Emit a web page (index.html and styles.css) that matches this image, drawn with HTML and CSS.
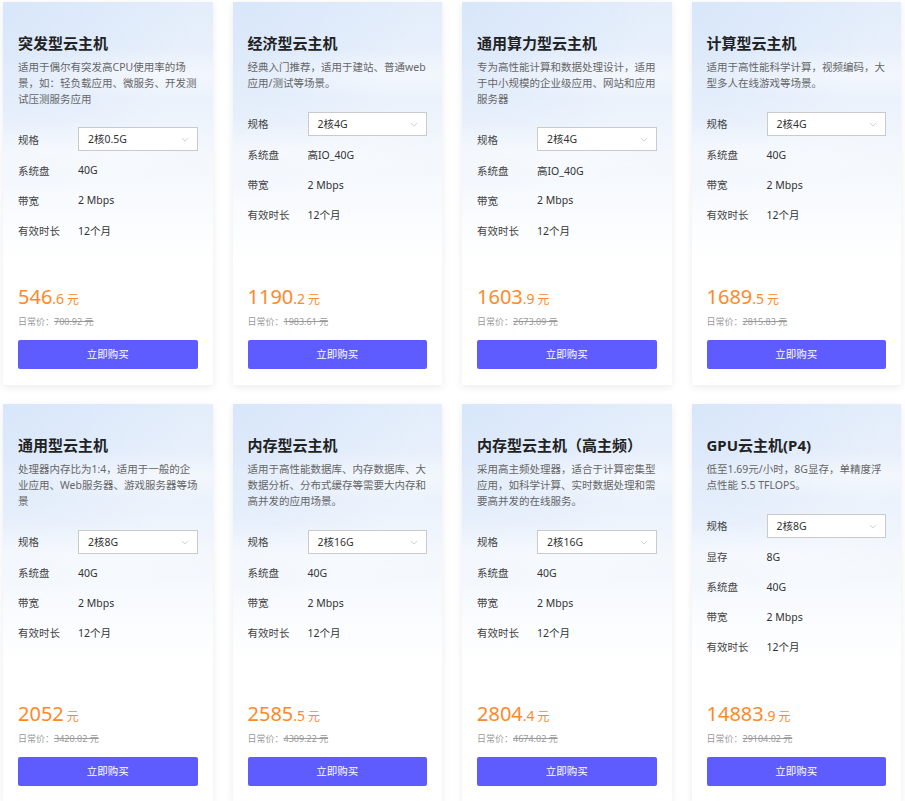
FILE: index.html
```html
<!DOCTYPE html>
<html lang="zh-CN">
<head>
    <meta charset="UTF-8">
    <meta name="viewport" content="width=device-width, initial-scale=1.0">
    <title>云主机</title>
    <link rel="stylesheet" href="styles.css">
</head>
<body>
    <div class="product-list">
        <!-- 第一行 -->
        <div class="product-card">
            <h3 class="product-title">突发型云主机</h3>
            <p class="product-desc">适用于偶尔有突发高CPU使用率的场景，如：轻负载应用、微服务、开发测试压测服务应用</p>
            <div class="spec-list">
                <div class="spec-row first"><span class="spec-label">规格</span><div class="spec-select">2核0.5G<svg class="arrow" viewBox="0 0 10 6"><polyline points="1,1 5,5 9,1"/></svg></div></div>
                <div class="spec-row"><span class="spec-label">系统盘</span><span class="spec-value">40G</span></div>
                <div class="spec-row"><span class="spec-label">带宽</span><span class="spec-value">2 Mbps</span></div>
                <div class="spec-row"><span class="spec-label">有效时长</span><span class="spec-value">12个月</span></div>
            </div>
            <div class="price"><span class="price-int">546</span><span class="price-dec">.6</span><span class="price-unit">元</span></div>
            <div class="price-old">日常价：<s>700.92 元</s></div>
            <a class="buy-btn">立即购买</a>
        </div>
        <div class="product-card">
            <h3 class="product-title">经济型云主机</h3>
            <p class="product-desc">经典入门推荐，适用于建站、普通web应用/测试等场景。</p>
            <div class="spec-list">
                <div class="spec-row first"><span class="spec-label">规格</span><div class="spec-select">2核4G<svg class="arrow" viewBox="0 0 10 6"><polyline points="1,1 5,5 9,1"/></svg></div></div>
                <div class="spec-row"><span class="spec-label">系统盘</span><span class="spec-value">高IO_40G</span></div>
                <div class="spec-row"><span class="spec-label">带宽</span><span class="spec-value">2 Mbps</span></div>
                <div class="spec-row"><span class="spec-label">有效时长</span><span class="spec-value">12个月</span></div>
            </div>
            <div class="price"><span class="price-int">1190</span><span class="price-dec">.2</span><span class="price-unit">元</span></div>
            <div class="price-old">日常价：<s>1983.61 元</s></div>
            <a class="buy-btn">立即购买</a>
        </div>
        <div class="product-card">
            <h3 class="product-title">通用算力型云主机</h3>
            <p class="product-desc">专为高性能计算和数据处理设计，适用于中小规模的企业级应用、网站和应用服务器</p>
            <div class="spec-list">
                <div class="spec-row first"><span class="spec-label">规格</span><div class="spec-select">2核4G<svg class="arrow" viewBox="0 0 10 6"><polyline points="1,1 5,5 9,1"/></svg></div></div>
                <div class="spec-row"><span class="spec-label">系统盘</span><span class="spec-value">高IO_40G</span></div>
                <div class="spec-row"><span class="spec-label">带宽</span><span class="spec-value">2 Mbps</span></div>
                <div class="spec-row"><span class="spec-label">有效时长</span><span class="spec-value">12个月</span></div>
            </div>
            <div class="price"><span class="price-int">1603</span><span class="price-dec">.9</span><span class="price-unit">元</span></div>
            <div class="price-old">日常价：<s>2673.09 元</s></div>
            <a class="buy-btn">立即购买</a>
        </div>
        <div class="product-card">
            <h3 class="product-title">计算型云主机</h3>
            <p class="product-desc">适用于高性能科学计算，视频编码，大型多人在线游戏等场景。</p>
            <div class="spec-list">
                <div class="spec-row first"><span class="spec-label">规格</span><div class="spec-select">2核4G<svg class="arrow" viewBox="0 0 10 6"><polyline points="1,1 5,5 9,1"/></svg></div></div>
                <div class="spec-row"><span class="spec-label">系统盘</span><span class="spec-value">40G</span></div>
                <div class="spec-row"><span class="spec-label">带宽</span><span class="spec-value">2 Mbps</span></div>
                <div class="spec-row"><span class="spec-label">有效时长</span><span class="spec-value">12个月</span></div>
            </div>
            <div class="price"><span class="price-int">1689</span><span class="price-dec">.5</span><span class="price-unit">元</span></div>
            <div class="price-old">日常价：<s>2815.83 元</s></div>
            <a class="buy-btn">立即购买</a>
        </div>
        <!-- 第二行 -->
        <div class="product-card">
            <h3 class="product-title">通用型云主机</h3>
            <p class="product-desc">处理器内存比为1:4，适用于一般的企业应用、Web服务器、游戏服务器等场景</p>
            <div class="spec-list">
                <div class="spec-row first"><span class="spec-label">规格</span><div class="spec-select">2核8G<svg class="arrow" viewBox="0 0 10 6"><polyline points="1,1 5,5 9,1"/></svg></div></div>
                <div class="spec-row"><span class="spec-label">系统盘</span><span class="spec-value">40G</span></div>
                <div class="spec-row"><span class="spec-label">带宽</span><span class="spec-value">2 Mbps</span></div>
                <div class="spec-row"><span class="spec-label">有效时长</span><span class="spec-value">12个月</span></div>
            </div>
            <div class="price"><span class="price-int">2052</span><span class="price-unit">元</span></div>
            <div class="price-old">日常价：<s>3420.02 元</s></div>
            <a class="buy-btn">立即购买</a>
        </div>
        <div class="product-card">
            <h3 class="product-title">内存型云主机</h3>
            <p class="product-desc">适用于高性能数据库、内存数据库、大数据分析、分布式缓存等需要大内存和高并发的应用场景。</p>
            <div class="spec-list">
                <div class="spec-row first"><span class="spec-label">规格</span><div class="spec-select">2核16G<svg class="arrow" viewBox="0 0 10 6"><polyline points="1,1 5,5 9,1"/></svg></div></div>
                <div class="spec-row"><span class="spec-label">系统盘</span><span class="spec-value">40G</span></div>
                <div class="spec-row"><span class="spec-label">带宽</span><span class="spec-value">2 Mbps</span></div>
                <div class="spec-row"><span class="spec-label">有效时长</span><span class="spec-value">12个月</span></div>
            </div>
            <div class="price"><span class="price-int">2585</span><span class="price-dec">.5</span><span class="price-unit">元</span></div>
            <div class="price-old">日常价：<s>4309.22 元</s></div>
            <a class="buy-btn">立即购买</a>
        </div>
        <div class="product-card">
            <h3 class="product-title">内存型云主机（高主频）</h3>
            <p class="product-desc">采用高主频处理器，适合于计算密集型应用，如科学计算、实时数据处理和需要高并发的在线服务。</p>
            <div class="spec-list">
                <div class="spec-row first"><span class="spec-label">规格</span><div class="spec-select">2核16G<svg class="arrow" viewBox="0 0 10 6"><polyline points="1,1 5,5 9,1"/></svg></div></div>
                <div class="spec-row"><span class="spec-label">系统盘</span><span class="spec-value">40G</span></div>
                <div class="spec-row"><span class="spec-label">带宽</span><span class="spec-value">2 Mbps</span></div>
                <div class="spec-row"><span class="spec-label">有效时长</span><span class="spec-value">12个月</span></div>
            </div>
            <div class="price"><span class="price-int">2804</span><span class="price-dec">.4</span><span class="price-unit">元</span></div>
            <div class="price-old">日常价：<s>4674.02 元</s></div>
            <a class="buy-btn">立即购买</a>
        </div>
        <div class="product-card">
            <h3 class="product-title">GPU云主机(P4)</h3>
            <p class="product-desc">低至1.69元/小时，8G显存，单精度浮点性能 5.5 TFLOPS。</p>
            <div class="spec-list">
                <div class="spec-row first"><span class="spec-label">规格</span><div class="spec-select">2核8G<svg class="arrow" viewBox="0 0 10 6"><polyline points="1,1 5,5 9,1"/></svg></div></div>
                <div class="spec-row"><span class="spec-label">显存</span><span class="spec-value">8G</span></div>
                <div class="spec-row"><span class="spec-label">系统盘</span><span class="spec-value">40G</span></div>
                <div class="spec-row"><span class="spec-label">带宽</span><span class="spec-value">2 Mbps</span></div>
                <div class="spec-row"><span class="spec-label">有效时长</span><span class="spec-value">12个月</span></div>
            </div>
            <div class="price"><span class="price-int">14883</span><span class="price-dec">.9</span><span class="price-unit">元</span></div>
            <div class="price-old">日常价：<s>29104.02 元</s></div>
            <a class="buy-btn">立即购买</a>
        </div>
    </div>
</body>
</html>
```

FILE: styles.css
```css
*{
    box-sizing: border-box;
}
body{
    margin: 0;
    background: #fff;
    font-family: "Noto Sans", "Noto Sans CJK SC", sans-serif;
    color: #333;
}
.product-list{
    display: grid;
    grid-template-columns: repeat(4, 1fr);
    gap: 19px 20px;
    padding: 2px 4px 20px 3px;
}
/* 卡片顶部浅蓝色渐变背景，往下渐变为白色 */
.product-card{
    display: flex;
    flex-direction: column;
    padding: 31px 15px 16px;
    background:
        radial-gradient(120% 36px at 75% 72px, rgba(255,255,255,.5), rgba(255,255,255,0) 70%),
        radial-gradient(140% 44px at 25% 150px, rgba(255,255,255,.45), rgba(255,255,255,0) 70%),
        radial-gradient(90% 200px at 0 0, rgba(208,226,249,.6), rgba(208,226,249,0) 100%),
        linear-gradient(180deg, #e3edfb 0, #edf3fc 110px, #f7fafe 190px, #fff 260px);
    box-shadow: 0 2px 8px rgba(0,0,0,.08);
}
.product-title{
    margin: 0;
    font-size: 15px;
    line-height: 20px;
    font-weight: bold;
    color: #222;
}
.product-desc{
    margin: 7px 0 0;
    font-size: 10.5px;
    line-height: 15.75px;
    color: #666;
}
.spec-list{
    margin: 16px 0 38px;
    font-size: 10.5px;
}
.spec-row{
    display: flex;
    align-items: center;
    height: 30px;
}
.spec-row.first{
    height: 32px;
}
.spec-label{
    width: 60px;
    flex-shrink: 0;
    color: #444;
}
.spec-value{
    color: #333;
}
.spec-select{
    flex: 1;
    position: relative;
    height: 24px;
    line-height: 22px;
    padding-left: 9px;
    border: 1px solid #cacaca;
    background: #fff;
    color: #333;
}
.spec-select .arrow{
    position: absolute;
    right: 8px;
    top: 9px;
    width: 8px;
    height: 5px;
    fill: none;
    stroke: #c4c7cc;
    stroke-width: 1;
}
.price{
    margin-top: auto;
    height: 28px;
    line-height: 28px;
    color: #fd8a2a;
    white-space: nowrap;
}
.price-int{
    font-size: 20px;
}
.price-dec{
    font-size: 14px;
}
.price-unit{
    font-size: 12px;
    margin-left: 3px;
}
.price-old{
    margin-top: 4px;
    height: 14px;
    line-height: 14px;
    font-size: 9px;
    color: #999;
}
.price-old s{
    color: #999;
}
.buy-btn{
    display: block;
    margin-top: 11px;
    height: 29px;
    line-height: 29px;
    text-align: center;
    font-size: 10.5px;
    color: #fff;
    background: #5f5cff;
    border-radius: 2px;
    cursor: pointer;
}
```
